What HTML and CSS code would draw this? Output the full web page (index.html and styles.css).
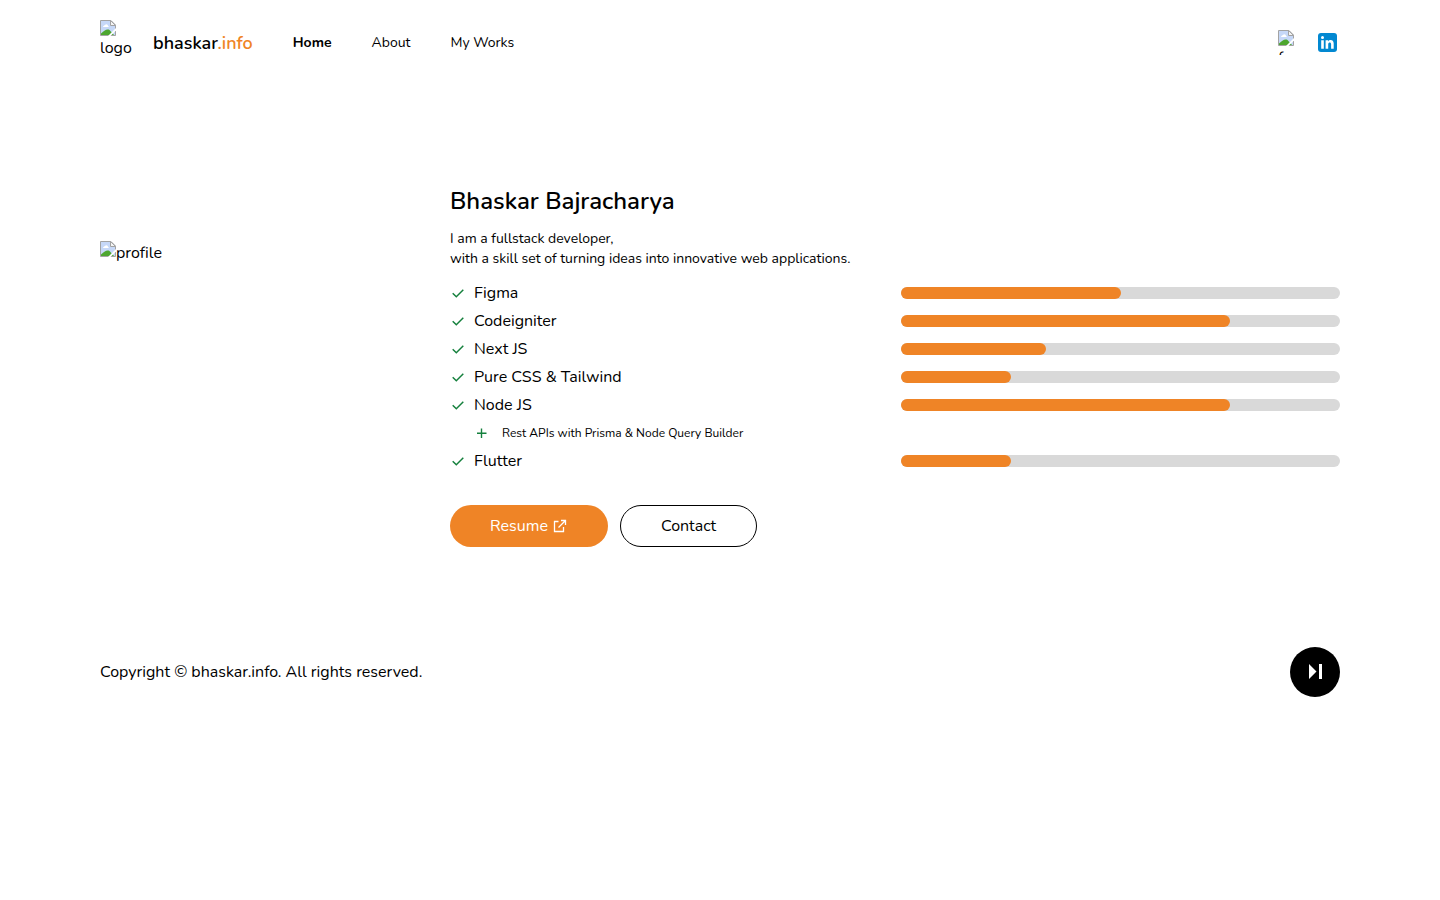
FILE: index.html
```html
<!DOCTYPE html>
<html lang="en">
<head>
<meta charset="utf-8">
<meta name="viewport" content="width=device-width, initial-scale=1">
<title>bhaskar.info</title>
<link rel="stylesheet" href="styles.css">
</head>
<body>
<svg class="sprite" aria-hidden="true">
  <symbol id="missing" viewBox="0 0 16 16">
    <path d="M0.500 0.500H11L15.500 5V15.500H0.500Z" fill="#c6d8f8" stroke="#a3a3a3"/>
    <path d="M3 7C3 5.500 4.500 5.500 5 5C6 3.500 8 4.500 8 6C9 6 9 7 8.500 7Z" fill="#fff"/>
    <path d="M1 15V13.500C4 10.500 7 8.500 9.500 10L14 15Z" fill="#4da62f"/>
    <path d="M8 16L16 8V10.500L10.500 16Z" fill="#fff"/>
    <path d="M10.500 0.500V5.500H15.500L10.500 0.500Z" fill="#f4f4f4" stroke="#a3a3a3"/>
  </symbol>
  <symbol id="check" viewBox="0 0 16 16">
    <path d="M2.700 8.200L6.300 11.700L13.300 4.700" fill="none" stroke="#15803d" stroke-width="1.500"/>
  </symbol>
  <symbol id="plus" viewBox="0 0 16 16">
    <path d="M7.500 3.500V13M3 8.300H12.500" fill="none" stroke="#15803d" stroke-width="1.400"/>
  </symbol>
</svg>

<header class="header">
  <a class="brand" href="#">
    <span class="logo"><svg class="missing"><use href="#missing"/></svg><span>logo</span></span>
    <span class="brand-name">bhaskar<span class="accent">.info</span></span>
  </a>
  <nav class="nav">
    <a class="active" href="#">Home</a>
    <a href="#about">About</a>
    <a href="#works">My Works</a>
  </nav>
  <div class="social">
    <a class="social-missing" href="#"><svg class="missing"><use href="#missing"/></svg><span>f</span></a>
    <a class="social-link" href="#" aria-label="LinkedIn">
      <svg viewBox="0 0 25 25" width="25" height="25">
        <rect x="3" y="3" width="19" height="19" rx="3" fill="#0288d1"/>
        <circle cx="7.500" cy="7.600" r="1.500" fill="#fff"/>
        <path d="M6.200 10.300H8.800V18.800H6.200ZM10.600 10.300H13.100V11.500C14.500 9.300 18.700 9.500 18.700 13.600V18.800H16.100V14.300C16.100 11.700 13.200 11.900 13.200 14.300V18.800H10.600Z" fill="#fff"/>
      </svg>
    </a>
  </div>
</header>

<main class="main">
  <div class="profile"><svg class="missing"><use href="#missing"/></svg><span>profile</span></div>
  <section class="intro">
    <h1>Bhaskar Bajracharya</h1>
    <p class="lead">I am a fullstack developer,<br>with a skill set of turning ideas into innovative web applications.</p>
    <ul class="skills">
      <li class="skill"><span class="skill-name"><svg class="mark"><use href="#check"/></svg>Figma</span><span class="bar"><span class="fill" style="width:50%"></span></span></li>
      <li class="skill"><span class="skill-name"><svg class="mark"><use href="#check"/></svg>Codeigniter</span><span class="bar"><span class="fill" style="width:75%"></span></span></li>
      <li class="skill"><span class="skill-name"><svg class="mark"><use href="#check"/></svg>Next JS</span><span class="bar"><span class="fill" style="width:33%"></span></span></li>
      <li class="skill"><span class="skill-name"><svg class="mark"><use href="#check"/></svg>Pure CSS &amp; Tailwind</span><span class="bar"><span class="fill" style="width:25%"></span></span></li>
      <li class="skill"><span class="skill-name"><svg class="mark"><use href="#check"/></svg>Node JS</span><span class="bar"><span class="fill" style="width:75%"></span></span></li>
      <li class="skill-detail"><svg class="mark"><use href="#plus"/></svg>Rest APIs with Prisma &amp; Node Query Builder</li>
      <li class="skill"><span class="skill-name"><svg class="mark"><use href="#check"/></svg>Flutter</span><span class="bar"><span class="fill" style="width:25%"></span></span></li>
    </ul>
    <div class="actions">
      <button class="button primary" type="button">Resume
        <svg viewBox="0 0 16 16" width="16" height="16" fill="none" stroke="#fff" stroke-width="1.300"><path d="M6.500 3.500H2.500V13.500H11.500V9M9 2.500H13.500V7M13.500 2.500L6.500 9.500"/></svg>
      </button>
      <button class="button" type="button">Contact</button>
    </div>
  </section>
</main>

<footer class="footer">
  <p>Copyright © bhaskar.info. All rights reserved.</p>
  <button class="skip" type="button" aria-label="Next">
    <svg viewBox="0 0 24 24" width="24" height="24" fill="#fff"><path d="M6 4L13.500 11.500L6 19ZM16 4H19V19H16Z"/></svg>
  </button>
</footer>
</body>
</html>
```
FILE: styles.css
```css
* { box-sizing: border-box; }

body {
  margin: 0;
  padding: 0 100px;
  background: #fff;
  color: #000;
  font: 16px/24px Nunito, "Nunito Sans", Lato, sans-serif;
  text-rendering: optimizeSpeed;
}

h1, p, ul { margin: 0; padding: 0; }
ul { list-style: none; }
a { color: inherit; text-decoration: none; }
svg { display: block; flex: none; }
.sprite { position: absolute; width: 0; height: 0; }
.missing { width: 16px; height: 16px; }

.header { display: flex; align-items: center; gap: 40px; padding: 20px 0; }
.brand { display: flex; align-items: center; gap: 20px; }
.logo { width: 33px; height: 45px; }
.brand-name { font-size: 18px; font-weight: 600; }
.accent { color: #ef8426; }
.nav { display: flex; gap: 40px; font-size: 14px; }
.active { font-weight: 700; }
.social { display: flex; gap: 20px; margin-left: auto; }
.social-missing { width: 17px; height: 25px; overflow: hidden; }
.social-link { width: 25px; height: 25px; }

.main { display: grid; grid-template-columns: 338px 1fr; gap: 12px; padding: 100px 0; }
.profile { display: flex; padding-top: 56px; }
.intro { min-width: 0; }
h1 { font-size: 24px; line-height: 32px; font-weight: 600; }
.lead { margin: 12px 0; font-size: 14px; line-height: 20px; }
.skills { display: grid; gap: 4px; }
.skill { display: grid; grid-template-columns: 1fr 1fr; gap: 12px; align-items: center; }
.skill-name { display: flex; align-items: center; gap: 8px; }
.mark { width: 16px; height: 16px; }
.bar { height: 12px; border-radius: 6px; background: #d9d9d9; }
.fill { display: block; height: 12px; border-radius: 6px; background: #ef8426; }
.skill-detail { display: flex; align-items: center; gap: 12px; padding-left: 24px; font-size: 12px; }

.actions { display: flex; gap: 12px; margin-top: 32px; }
.button {
  display: flex;
  align-items: center;
  gap: 4px;
  padding: 8px 40px;
  border: 1px solid #000;
  border-radius: 21px;
  background: #fff;
  color: #000;
  font: inherit;
  cursor: pointer;
}
.primary { border: 0; background: #ef8426; color: #fff; }

.footer { display: flex; align-items: center; justify-content: space-between; }
.skip {
  display: grid;
  place-items: center;
  width: 50px;
  height: 50px;
  padding: 0;
  border: 0;
  border-radius: 50%;
  background: #000;
  cursor: pointer;
}
```
